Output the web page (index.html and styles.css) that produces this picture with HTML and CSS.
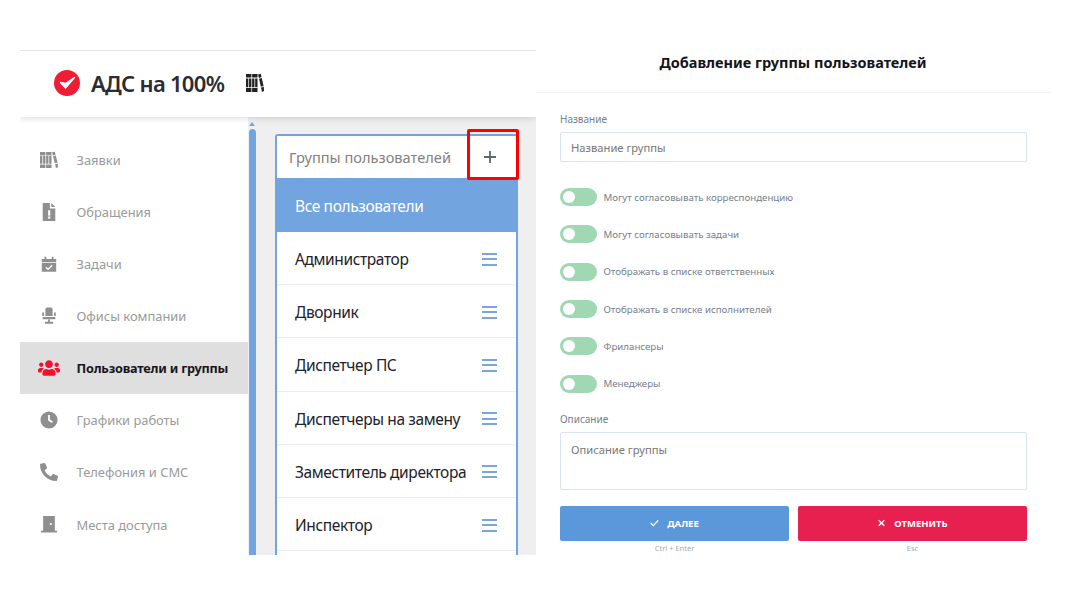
FILE: index.html
```html
<!DOCTYPE html>
<html lang="ru">
<head>
    <meta charset="UTF-8">
    <title>Добавление группы пользователей</title>
    <link rel="stylesheet" href="styles.css">
</head>
<body>
    <div class="shot">
        <div class="app">
            <header class="app-head">
                <svg class="logo" viewBox="0 0 26 26"><circle cx="13" cy="13" r="13" fill="#ee1c34"/><path d="M6.500 12.500l5 5.500 9-10.500-9 6z" fill="#fff" stroke="#fff" stroke-width="1.400" stroke-linejoin="round"/></svg>
                <span class="brand">АДС на 100%</span>
                <svg class="books" viewBox="0 0 20 20" preserveAspectRatio="none"><use href="#books"/></svg>
            </header>
            <div class="app-body">
                <nav class="side">
                    <a class="nav-item"><svg viewBox="0 0 20 20"><use href="#books"/></svg>Заявки</a>
                    <a class="nav-item"><svg viewBox="0 0 20 20"><path d="M3 0h8v6h6v14H3zM12.500 0L17 4.500h-4.500z"/><rect x="9" y="8" width="2.400" height="6" fill="#fff"/><rect x="9" y="15" width="2.400" height="2.400" fill="#fff"/></svg>Обращения</a>
                    <a class="nav-item"><svg viewBox="0 0 20 20"><path d="M2 4.500h3V2h2v2.500h6V2h2v2.500h3V8H2zM2 9h16v9.500H2z"/><path d="M6.500 13.500l2.500 2.500 4.500-4.500" fill="none" stroke="#fff" stroke-width="1.500"/></svg>Задачи</a>
                    <a class="nav-item"><svg viewBox="0 0 20 20"><path d="M6 2.500a2 2 0 0 1 2-2h4a2 2 0 0 1 2 2V10H6zM2.500 6h2v4h-2zM15.500 6h2v4h-2zM3 11h14v2.500H3zM9 14h2v2.500h3.500v2h-9v-2H9z"/></svg>Офисы компании</a>
                    <a class="nav-item active"><svg viewBox="0 0 640 512"><path d="M96 224c35.300 0 64-28.700 64-64s-28.700-64-64-64-64 28.700-64 64 28.700 64 64 64zm448 0c35.300 0 64-28.700 64-64s-28.700-64-64-64-64 28.700-64 64 28.700 64 64 64zm32 32h-64c-17.600 0-33.500 7.100-45.100 18.600 40.300 22.100 68.900 62 75.100 109.400h66c17.700 0 32-14.300 32-32v-32c0-35.300-28.700-64-64-64zm-256 0c61.900 0 112-50.100 112-112S381.900 32 320 32 208 82.100 208 144s50.100 112 112 112zm76.800 32h-8.300c-20.800 10-43.900 16-68.500 16s-47.600-6-68.500-16h-8.300C179.600 288 128 339.600 128 403.200V432c0 26.500 21.500 48 48 48h288c26.500 0 48-21.500 48-48v-28.800c0-63.600-51.600-115.200-115.200-115.200zm-223.700-13.400C161.500 263.100 145.600 256 128 256H64c-35.300 0-64 28.700-64 64v32c0 17.700 14.300 32 32 32h65.900c6.300-47.400 34.900-87.300 75.200-109.400z"/></svg>Пользователи и группы</a>
                    <a class="nav-item"><svg viewBox="0 0 20 20"><circle cx="10" cy="10" r="9.500"/><path d="M10 4.500V10l3.800 2.500" fill="none" stroke="#fff" stroke-width="2"/></svg>Графики работы</a>
                    <a class="nav-item"><svg viewBox="0 0 512 512"><path transform="matrix(-1 0 0 1 512 0)" d="M493.400 24.600l-104-24c-11.300-2.600-22.900 3.300-27.500 13.900l-48 112c-4.200 9.800-1.400 21.300 6.900 28l60.600 49.600c-36 76.700-98.900 140.500-177.200 177.200l-49.600-60.600c-6.800-8.300-18.200-11.100-28-6.900l-112 48C3.900 366.500-2 378.100.6 389.400l24 104C27.100 504.200 36.700 512 48 512c256.100 0 464-207.500 464-464 0-11.200-7.700-20.900-18.600-23.400z"/></svg>Телефония и СМС</a>
                    <a class="nav-item"><svg viewBox="0 0 20 20"><path d="M3.500 1h13v16.500H19V19.500H1v-2h2.500z"/><rect x="11" y="9" width="2" height="2" fill="#fff"/></svg>Места доступа</a>
                </nav>
                <div class="scroll">
                    <span class="scroll-up"></span>
                    <span class="scroll-thumb"></span>
                </div>
                <main class="content">
                    <section class="groups">
                        <div class="groups-head">
                            <span>Группы пользователей</span>
                            <svg class="plus" viewBox="0 0 12 12"><path d="M6 0v12M0 6h12"/></svg>
                        </div>
                        <div class="group all">Все пользователи</div>
                        <div class="group">Администратор<span class="burger"></span></div>
                        <div class="group">Дворник<span class="burger"></span></div>
                        <div class="group">Диспетчер ПС<span class="burger"></span></div>
                        <div class="group">Диспетчеры на замену<span class="burger"></span></div>
                        <div class="group">Заместитель директора<span class="burger"></span></div>
                        <div class="group">Инспектор<span class="burger"></span></div>
                        <div class="group"></div>
                    </section>
                    <span class="callout"></span>
                </main>
            </div>
        </div>

        <form class="dialog">
            <h2>Добавление группы пользователей</h2>
            <div class="dialog-body">
                <label class="field-label">Название</label>
                <input class="input" type="text" placeholder="Название группы">
                <div class="toggles">
                    <label class="toggle"><i></i>Могут согласовывать корреспонденцию</label>
                    <label class="toggle"><i></i>Могут согласовывать задачи</label>
                    <label class="toggle"><i></i>Отображать в списке ответственных</label>
                    <label class="toggle"><i></i>Отображать в списке исполнителей</label>
                    <label class="toggle"><i></i>Фрилансеры</label>
                    <label class="toggle"><i></i>Менеджеры</label>
                </div>
                <label class="field-label">Описание</label>
                <textarea class="input area" placeholder="Описание группы"></textarea>
                <div class="actions">
                    <div class="action">
                        <button class="btn btn-ok" type="button"><svg viewBox="0 0 12 10"><path d="M1 5l3.500 3.500L11 1.500"/></svg>ДАЛЕЕ</button>
                        <small>Ctrl + Enter</small>
                    </div>
                    <div class="action">
                        <button class="btn btn-cancel" type="button"><svg viewBox="0 0 10 10"><path d="M1.500 1.500l7 7M8.500 1.500l-7 7"/></svg>ОТМЕНИТЬ</button>
                        <small>Esc</small>
                    </div>
                </div>
            </div>
        </form>
    </div>

    <svg class="defs" width="0" height="0">
        <symbol id="books" viewBox="0 0 20 20" preserveAspectRatio="none">
            <path d="M0 1h6v3.600H0zM0 5.400h2.600v8.800H0zM3.400 5.400H6v8.800H3.400zM0 15h6v4H0zM6.800 1h6v3.600h-6zM6.800 5.400h2.600v8.800H6.800zM10.200 5.400h2.600v8.800h-2.600zM6.800 15h6v4h-6zM13.400 1.500l3-.8.900 3.400-3 .8zM14.500 5.700l3-.8 2 8-3 .8zM16.800 14.600l3-.8.200 4.200-2.300.9z"/>
        </symbol>
    </svg>
</body>
</html>
```

FILE: styles.css
```css
* {
    box-sizing: border-box;
}
body {
    margin: 0;
    background: #fff;
    font-family: "Noto Sans", "Open Sans", sans-serif;
}
.defs {
    position: absolute;
}
.shot {
    display: flex;
    padding-left: 20px;
    height: 596px;
    overflow: hidden;
}

/* left: app */
.app {
    width: 516px;
    height: 505px;
    margin-top: 50px;
    border-top: 1px solid #e6e6e6;
    display: flex;
    flex-direction: column;
    overflow: hidden;
}
.app-head {
    position: relative;
    z-index: 2;
    height: 66px;
    flex: none;
    display: flex;
    align-items: center;
    padding-bottom: 2px;
    background: #fff;
    box-shadow: 0 2px 6px rgba(0, 0, 0, 0.12);
}
.logo {
    width: 26px;
    height: 26px;
    margin-left: 34px;
}
.brand {
    margin-left: 11px;
    padding-bottom: 1px;
    font-size: 22px;
    font-weight: 600;
    letter-spacing: -0.7px;
    color: #2b2b33;
}
.books {
    width: 18px;
    height: 20px;
    margin-left: 22px;
    fill: #222;
}
.app-body {
    flex: 1;
    min-height: 0;
    display: flex;
}
.side {
    width: 228px;
    flex: none;
    padding-top: 16.500px;
    background: #fff;
}
.nav-item {
    display: flex;
    align-items: center;
    height: 52.150px;
    padding-left: 56.500px;
    position: relative;
    font-size: 12.900px;
    color: #9a9a9a;
}
.nav-item svg {
    position: absolute;
    left: 20px;
    top: 17px;
    width: 18px;
    height: 18px;
    fill: #8f8f8f;
}
.nav-item.active {
    background: #dfdfdf;
    color: #16161c;
    font-weight: 700;
    font-size: 12.700px;
    letter-spacing: -0.2px;
}
.nav-item.active svg {
    left: 18px;
    width: 22px;
    fill: #f5102c;
}
.scroll {
    width: 8px;
    flex: none;
    background: #eef1f5;
    padding-top: 5px;
}
.scroll-up {
    display: block;
    width: 0;
    margin: 0 auto 3px;
    border: 3px solid transparent;
    border-top: 0;
    border-bottom: 4px solid #7ba6dc;
}
.scroll-thumb {
    display: block;
    width: 7px;
    height: 100%;
    margin: 0 auto;
    border-radius: 4px 4px 0 0;
    background: #72a4e0;
}
.content {
    position: relative;
    flex: 1;
    padding: 17px 18px 0 19px;
    background: #efefef;
}
.groups {
    width: 243px;
    border: 2px solid #72a4e0;
    border-bottom: 0;
    border-radius: 3px 3px 0 0;
    background: #fff;
}
.groups-head {
    display: flex;
    align-items: center;
    justify-content: space-between;
    height: 42px;
    padding: 0 20px 1px 12px;
    font-size: 14.600px;
    letter-spacing: 0.01px;
    color: #84807c;
}
.plus {
    width: 12px;
    height: 12px;
    stroke: #5b6672;
    stroke-width: 1.800;
    fill: none;
}
.group {
    display: flex;
    align-items: center;
    justify-content: space-between;
    height: 53.200px;
    padding: 2px 19px 0 18px;
    border-bottom: 1px solid #ededed;
    font-size: 15.500px;
    letter-spacing: -0.38px;
    color: #22222a;
}
.group.all {
    height: 54px;
    border: 0;
    background: #72a4e0;
    color: #fff;
}
.burger {
    width: 15px;
    height: 13px;
    flex: none;
    border-top: 2px solid #7ba6dc;
    border-bottom: 2px solid #7ba6dc;
    position: relative;
}
.burger::after {
    content: "";
    position: absolute;
    left: 0;
    right: 0;
    top: 3.500px;
    height: 2px;
    background: #7ba6dc;
}
.callout {
    position: absolute;
    left: 211px;
    top: 12px;
    width: 52px;
    height: 51px;
    border: 3px solid #f00;
    border-radius: 2px;
}

/* right: dialog */
.dialog {
    width: 514px;
    flex: none;
}
.dialog h2 {
    height: 44px;
    margin: 49px 0 0;
    border-bottom: 1px solid #eef0f2;
    text-align: center;
    font-size: 14.500px;
    font-weight: 700;
    line-height: 26px;
    color: #14141a;
}
.dialog-body {
    padding: 18px 23px 0 24px;
}
.field-label {
    display: block;
    height: 21px;
    font-size: 10px;
    line-height: 16px;
    color: #76808c;
}
.input {
    display: block;
    width: 100%;
    height: 30px;
    padding: 0 10px;
    border: 1px solid #d6e4f3;
    border-radius: 2px;
    outline: none;
    resize: none;
    background: #fff;
    font-family: inherit;
    font-size: 11.200px;
    color: #777;
}
.input::placeholder {
    color: #777;
    opacity: 1;
}
.area {
    height: 58px;
    padding-top: 9px;
}
.toggles {
    padding: 26px 0 18px;
}
.toggle {
    display: flex;
    align-items: center;
    height: 18px;
    margin-bottom: 19.350px;
    font-size: 9.700px;
    color: #76808c;
}
.toggle:last-child {
    margin-bottom: 0;
}
.toggle i {
    position: relative;
    width: 37px;
    height: 18px;
    margin-right: 6.500px;
    flex: none;
    border-radius: 9px;
    background: #9fd8b3;
}
.toggle i::after {
    content: "";
    position: absolute;
    left: 3px;
    top: 3px;
    width: 12px;
    height: 12px;
    border-radius: 50%;
    background: #fff;
}
.actions {
    display: flex;
    gap: 9px;
    margin-top: 16px;
}
.action {
    flex: 1;
    text-align: center;
}
.action small {
    display: block;
    margin-top: 2px;
    font-size: 7.500px;
    line-height: 10px;
    color: #a3a9b0;
}
.btn {
    display: flex;
    align-items: center;
    justify-content: center;
    width: 100%;
    height: 35px;
    border: 0;
    border-radius: 2px;
    font-family: inherit;
    font-size: 9.500px;
    font-weight: 700;
    color: #fff;
}
.btn svg {
    width: 9px;
    height: 8px;
    margin-right: 8px;
    fill: none;
    stroke: #fff;
    stroke-width: 1.800;
}
.btn-ok {
    background: #5a98da;
}
.btn-cancel {
    background: #e82050;
}
```
